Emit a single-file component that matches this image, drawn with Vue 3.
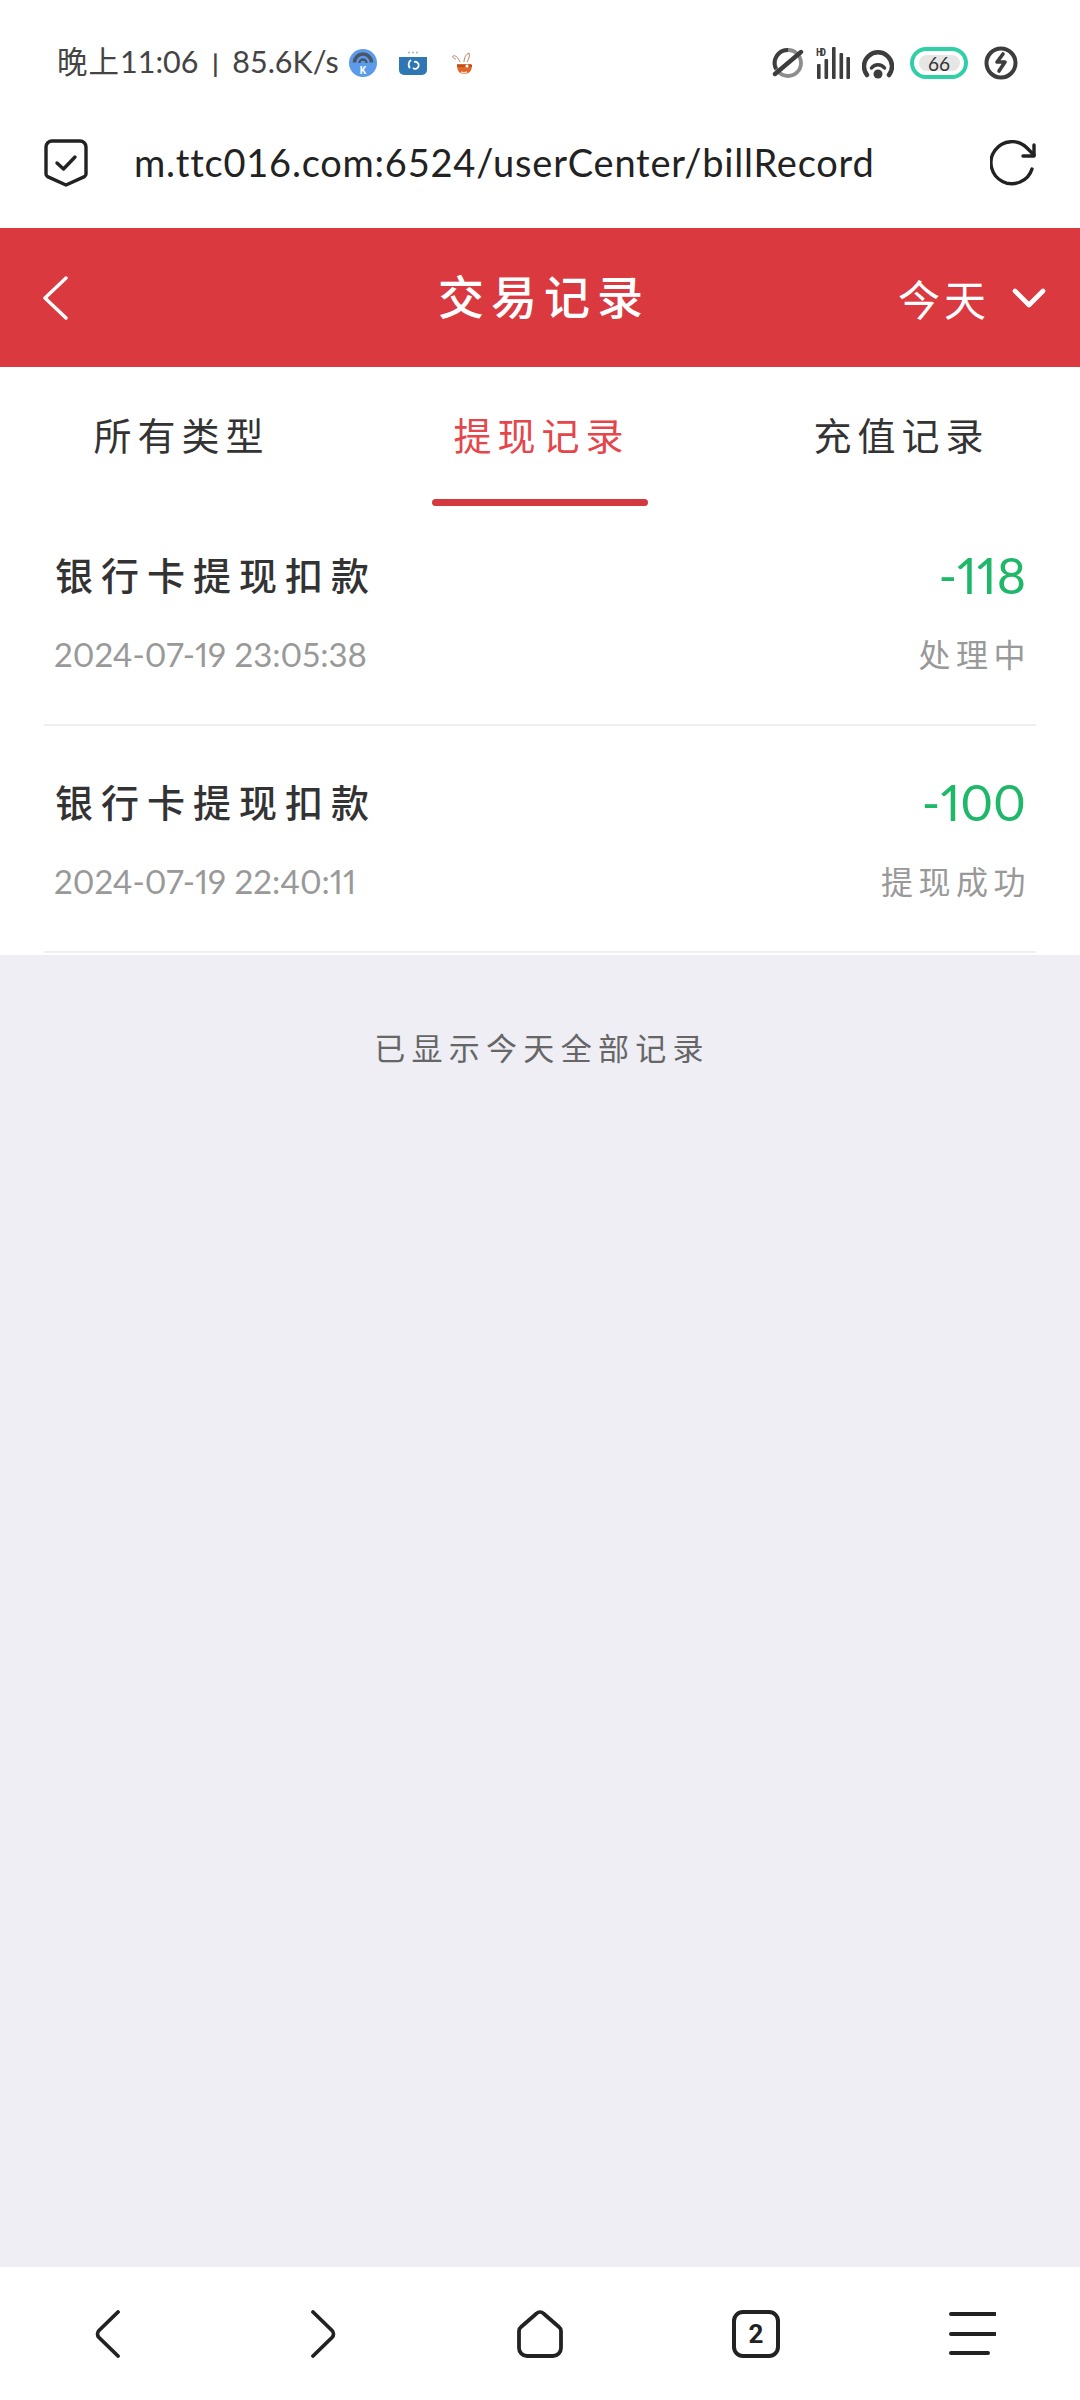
<script setup>
import { ref } from 'vue'

const tabs = ['所有类型', '提现记录', '充值记录']
const activeTab = ref(1)

const records = [
  { id: 1, title: '银行卡提现扣款', amount: '-118', time: '2024-07-19 23:05:38', status: '处理中' },
  { id: 2, title: '银行卡提现扣款', amount: '-100', time: '2024-07-19 22:40:11', status: '提现成功' }
]
</script>

<template>
  <div class="page">
    <div class="status-bar">
      <div class="status-left">
        <span class="status-text"><b class="cn">晚上</b>11:06 <i class="sep">|</i> 85.6K/s</span>
        <svg class="app-k" viewBox="0 0 28 28">
          <circle cx="14" cy="14" r="14" fill="#5b9bea" />
          <path d="M5.5 13.5a8.5 8.5 0 0 1 17 0" fill="none" stroke="#4a5568" stroke-width="3.6" />
          <path d="M10.5 14a3.5 3.5 0 0 1 7 0" fill="none" stroke="#4a5568" stroke-width="2.4" />
          <text x="14" y="25" text-anchor="middle" font-size="10" font-weight="700" fill="#fff" font-family="Roboto, sans-serif">K</text>
        </svg>
        <svg class="app-box" viewBox="0 0 28 24">
          <path d="M0 6h28v13a5 5 0 0 1-5 5H5a5 5 0 0 1-5-5z" fill="#2f76b5" />
          <circle cx="10" cy="1.5" r="1" fill="#9bb5cc" />
          <circle cx="14" cy="1.5" r="1" fill="#9bb5cc" />
          <circle cx="18" cy="1.5" r="1" fill="#9bb5cc" />
          <path d="M12 9c-3 2-3 6-1 8M15 11a3.500 3.500 0 1 1-1 6" fill="none" stroke="#fff" stroke-width="1.8" />
        </svg>
        <svg class="app-rabbit" viewBox="0 0 21 23">
          <path d="M8 10C6 5 3 3 1 4c-1 1 1 3 3 3M12 10c0-4 2-8 5-9 1 2 0 6-2 9" fill="#fff" stroke="#b5705a" stroke-width=".9" />
          <path d="M5 12h14l1 1c0 6-3 9-8 9s-7-4-7-9z" fill="#e0672a" />
          <path d="M5 14h15" stroke="#8a3b16" stroke-width="1" />
          <circle cx="15" cy="14" r="1.6" fill="#fff" />
          <path d="M9 20c2 1 4 1 6 0" stroke="#f7d9c4" stroke-width="1.5" fill="none" />
        </svg>
      </div>
      <div class="status-right">
        <svg class="ic-planet" viewBox="0 0 32 32">
          <circle cx="16" cy="16" r="13" fill="none" stroke="#8d8d8d" stroke-width="3.8" />
          <path d="M16 3a13 13 0 0 0-12 19" fill="none" stroke="#3d3d3d" stroke-width="3.8" />
          <path d="M3 27 29 5" stroke="#3d3d3d" stroke-width="4.4" stroke-linecap="round" />
        </svg>
        <svg class="ic-signal" viewBox="0 0 34 32">
          <text x="0" y="9" font-size="10" font-weight="700" fill="#3d3d3d" font-family="Roboto, sans-serif" textLength="10">HD</text>
          <rect x="1" y="17" width="3.6" height="15" rx="1" fill="#3d3d3d" />
          <rect x="8.5" y="12" width="3.6" height="20" rx="1" fill="#3d3d3d" />
          <rect x="16" y="0" width="3.6" height="32" rx="1" fill="#3d3d3d" />
          <rect x="23.5" y="6" width="3.6" height="26" rx="1" fill="#3d3d3d" />
          <rect x="30.4" y="10" width="3.6" height="22" rx="1" fill="#3d3d3d" />
        </svg>
        <svg class="ic-wifi" viewBox="0 0 32 32">
          <path d="M5 28a14 14 0 1 1 22 0" fill="none" stroke="#3d3d3d" stroke-width="4.5" stroke-linecap="round" />
          <path d="M9.5 21a8 8 0 0 1 13 0" fill="none" stroke="#3d3d3d" stroke-width="3.5" stroke-linecap="round" />
          <circle cx="16" cy="27" r="4.5" fill="#3d3d3d" />
        </svg>
        <div class="battery"><span class="battery-level"></span><span class="battery-num">66</span></div>
        <svg class="ic-charge" viewBox="0 0 34 34">
          <circle cx="17" cy="17" r="14.5" fill="none" stroke="#3d3d3d" stroke-width="4" />
          <path d="M19 8l-6 8h8l-6 9" fill="none" stroke="#3d3d3d" stroke-width="3.6" stroke-linecap="round" stroke-linejoin="round" />
        </svg>
      </div>
    </div>

    <div class="url-bar">
      <svg class="ic-shield" viewBox="0 0 44 48">
        <path d="M8 2h28a6 6 0 0 1 6 6v27a3 3 0 0 1-1.500 2.600L22 46 3.500 37.600A3 3 0 0 1 2 35V8a6 6 0 0 1 6-6z" fill="none" stroke="#222" stroke-width="3.400" stroke-linejoin="round" />
        <path d="M13 24l6.500 6L31 18" fill="none" stroke="#222" stroke-width="3.400" stroke-linecap="round" stroke-linejoin="round" />
      </svg>
      <span class="url">m.ttc016.com:6524/userCenter/billRecord</span>
      <svg class="ic-reload" viewBox="0 0 46 46">
        <path d="M42 29A21 21 0 1 1 37 8l7 7" fill="none" stroke="#222" stroke-width="3.4" stroke-linecap="round" />
        <path d="M44 5v11H33" fill="none" stroke="#222" stroke-width="3.4" stroke-linecap="round" stroke-linejoin="round" />
      </svg>
    </div>

    <header class="top-bar">
      <svg class="ic-back" viewBox="0 0 26 44">
        <path d="M24 2 3 22l21 20" fill="none" stroke="#fff" stroke-width="3.4" stroke-linecap="round" stroke-linejoin="round" />
      </svg>
      <h1 class="title">交易记录</h1>
      <div class="range">
        <span>今天</span>
        <svg class="ic-down" viewBox="0 0 34 20">
          <path d="M3 3l14 14L31 3" fill="none" stroke="#fff" stroke-width="4.6" stroke-linecap="round" stroke-linejoin="round" />
        </svg>
      </div>
    </header>

    <nav class="tabs">
      <div
        v-for="(tab, index) in tabs"
        :key="tab"
        class="tab"
        :class="{ active: activeTab === index }"
        @click="activeTab = index"
      >
        {{ tab }}
      </div>
    </nav>

    <div class="list">
      <div v-for="item in records" :key="item.id" class="record">
        <div class="row">
          <span class="rec-title">{{ item.title }}</span>
          <span class="rec-amount">{{ item.amount }}</span>
        </div>
        <div class="row row-sub">
          <span class="rec-time">{{ item.time }}</span>
          <span class="rec-status">{{ item.status }}</span>
        </div>
      </div>
    </div>

    <main class="rest">
      <p class="end-note">已显示今天全部记录</p>
    </main>

    <footer class="bottom-nav">
      <svg class="nav-ic" viewBox="0 0 48 48">
        <path d="M34 2 15 20.5a5 5 0 0 0 0 7L34 46" fill="none" stroke="#222" stroke-width="3.8" stroke-linecap="round" />
      </svg>
      <svg class="nav-ic" viewBox="0 0 48 48">
        <path d="M13 2 32 20.5a5 5 0 0 1 0 7L13 46" fill="none" stroke="#222" stroke-width="3.8" stroke-linecap="round" />
      </svg>
      <svg class="nav-ic" viewBox="0 0 48 48">
        <path d="M20.500 3.500a5 5 0 0 1 7 0L43 17a5 5 0 0 1 2 4v17a8 8 0 0 1-8 8H11a8 8 0 0 1-8-8V21a5 5 0 0 1 2-4z" fill="none" stroke="#222" stroke-width="3.8" stroke-linejoin="round" />
      </svg>
      <div class="tab-count">2</div>
      <svg class="nav-ic" viewBox="0 0 48 48">
        <path d="M3 4h44M3 24h44M3 43h37" fill="none" stroke="#222" stroke-width="4" stroke-linecap="round" />
      </svg>
    </footer>
  </div>
</template>

<style scoped>
.page {
  display: flex;
  flex-direction: column;
  width: 1080px;
  height: 2400px;
  background: #fff;
  font-family: "Noto Sans CJK SC", "Noto Sans", sans-serif;
  color: #333;
}

.status-bar {
  display: flex;
  align-items: center;
  justify-content: space-between;
  box-sizing: border-box;
  height: 98px;
  padding: 28px 62px 0 57px;
}

.status-left,
.status-right {
  display: flex;
  align-items: center;
}

.status-text {
  font-family: Lato, "Noto Sans CJK SC", sans-serif;
  font-size: 30.5px;
  line-height: 36px;
  margin-bottom: 2px;
  color: #444;
  white-space: nowrap;
  width: 292px;
}

.cn {
  font-weight: 400;
  letter-spacing: 1px;
}

.sep {
  font-style: normal;
  font-size: 24px;
  font-weight: 700;
  margin: 0 6px;
}

.app-k {
  width: 28px;
  height: 28px;
}

.app-box {
  width: 28px;
  height: 24px;
  margin-left: 22px;
}

.app-rabbit {
  width: 21px;
  height: 23px;
  margin-left: 25px;
}

.ic-planet {
  width: 32px;
  height: 32px;
}

.ic-signal {
  width: 34px;
  height: 32px;
  margin-left: 12px;
}

.ic-wifi {
  width: 32px;
  height: 32px;
  margin-left: 12px;
}

.battery {
  position: relative;
  box-sizing: border-box;
  width: 58px;
  height: 32px;
  margin-left: 16px;
  border: 4px solid #2fcfa7;
  border-radius: 16px;
  display: flex;
  align-items: center;
  justify-content: center;
}

.battery-level {
  position: absolute;
  left: 5px;
  top: 4px;
  bottom: 4px;
  right: 4px;
  background: #e6e6e6;
  border-radius: 8px;
}

.battery-num {
  position: relative;
  font-family: Lato, sans-serif;
  font-size: 19px;
  color: #333;
}

.ic-charge {
  width: 34px;
  height: 34px;
  margin-left: 16px;
}

.url-bar {
  display: flex;
  align-items: center;
  height: 130px;
  padding: 0 44px;
}

.ic-shield {
  width: 44px;
  height: 48px;
  flex: none;
}

.url {
  flex: 1;
  margin-left: 46px;
  font-family: Lato, sans-serif;
  font-size: 38px;
  line-height: 46px;
  margin-bottom: 3px;
  letter-spacing: 0.78px;
  color: #222;
  white-space: nowrap;
}

.ic-reload {
  width: 46px;
  height: 46px;
  flex: none;
}

.top-bar {
  display: flex;
  align-items: center;
  justify-content: space-between;
  position: relative;
  height: 139px;
  padding: 0 34px 0 42px;
  background: #d9393f;
  color: #fff;
}

.ic-back {
  width: 26px;
  height: 44px;
}

.title {
  position: absolute;
  left: 0;
  right: 0;
  top: 36px;
  margin: 0;
  padding-left: 8px;
  text-align: center;
  font-size: 46px;
  font-weight: 500;
  letter-spacing: 7px;
  line-height: 60px;
}

.range {
  display: flex;
  align-items: center;
  font-size: 42px;
  letter-spacing: 4px;
}

.ic-down {
  width: 34px;
  height: 20px;
  margin-left: 22px;
}

.tabs {
  display: grid;
  grid-template-columns: 1fr 1fr 1fr;
  height: 139px;
}

.tab {
  position: relative;
  display: flex;
  justify-content: center;
  align-items: center;
  box-sizing: border-box;
  padding: 60px 0 66px 3px;
  height: 139px;
  font-size: 38px;
  letter-spacing: 6px;
  color: #333;
}

.tab.active {
  color: #e4464b;
}

.tab.active::after {
  content: "";
  position: absolute;
  left: 72px;
  right: 72px;
  bottom: 0;
  height: 7px;
  border-radius: 4px;
  background: #d4393f;
}

.list {
  padding: 0 44px;
}

.record {
  padding: 50px 10px 48px;
  border-bottom: 2px solid #efefef;
}

.record:first-child {
  padding-top: 43px;
}

.row {
  display: flex;
  align-items: center;
  justify-content: space-between;
  height: 52px;
}

.row-sub {
  height: 44px;
  margin-top: 31px;
}

.rec-title {
  margin-left: 1px;
  margin-bottom: 4px;
  font-size: 38px;
  font-weight: 500;
  letter-spacing: 8px;
  color: #333;
}

.rec-amount {
  font-family: Lato, sans-serif;
  font-variant-numeric: proportional-nums;
  font-size: 50px;
  color: #1fb868;
}

.rec-time {
  font-family: Lato, sans-serif;
  font-variant-numeric: proportional-nums;
  font-size: 33px;
  color: #999;
}

.rec-status {
  font-size: 32px;
  letter-spacing: 5.5px;
  margin-right: -5px;
  margin-bottom: 3px;
  color: #999;
}

.rest {
  flex: 1;
  margin-top: 2px;
  background: #eeeef4;
}

.end-note {
  margin: 67px 0 0;
  padding-left: 4px;
  text-align: center;
  font-size: 31px;
  line-height: 50px;
  letter-spacing: 6.3px;
  color: #666;
}

.bottom-nav {
  display: flex;
  align-items: center;
  justify-content: space-between;
  height: 133px;
  padding: 0 84px;
  background: #fff;
}

.nav-ic {
  width: 48px;
  height: 48px;
}

.tab-count {
  display: flex;
  align-items: center;
  justify-content: center;
  box-sizing: border-box;
  width: 48px;
  height: 48px;
  border: 4px solid #222;
  border-radius: 11px;
  font-family: Roboto, sans-serif;
  font-size: 26px;
  font-weight: 700;
  color: #222;
}
</style>

<style>
body {
  margin: 0;
}
</style>
